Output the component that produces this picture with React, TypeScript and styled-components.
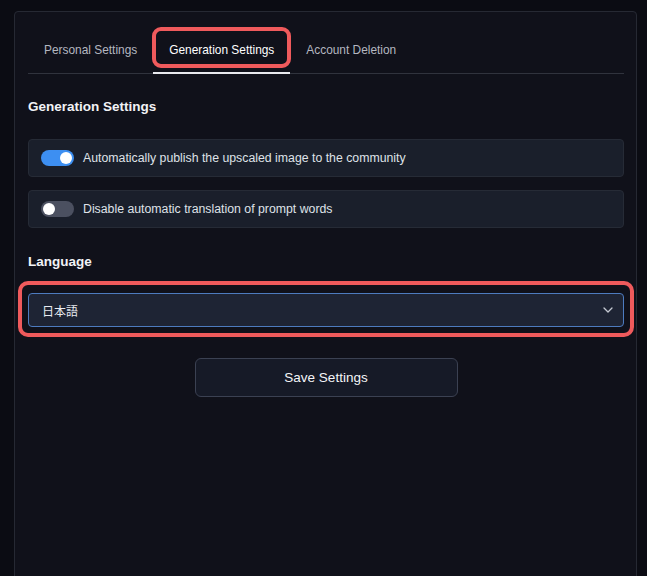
import React, { useState } from "react";
import styled, { createGlobalStyle } from "styled-components";

const Global = createGlobalStyle`
  html, body { margin: 0; padding: 0; background: #0b0c13; }
  body { font-family: "Liberation Sans", Arial, "Noto Sans CJK JP", sans-serif; color: #e6e8ee; }
  * { box-sizing: border-box; }
`;

const Page = styled.div`
  width: 647px;
  height: 576px;
  padding: 11px 10px 0 14px;
  overflow: hidden;
`;

const Card = styled.div`
  background: #10111a;
  border: 1px solid #262933;
  border-radius: 4px;
  height: 600px;
  padding: 16px 12px 0 13px;
`;

const TabBar = styled.div`
  display: flex;
  align-items: stretch;
  border-bottom: 1px solid #30333d;
  height: 46px;
`;

const Tab = styled.div<{ $active?: boolean; $highlight?: boolean }>`
  position: relative;
  display: flex;
  align-items: center;
  padding: 0 16px;
  font-size: 11.9px;
  color: ${(p) => (p.$active ? "#ffffff" : "#b4b7c0")};
  border-bottom: 2px solid ${(p) => (p.$active ? "#e8e9ee" : "transparent")};
  margin-bottom: -1px;
  ${(p) =>
    p.$highlight &&
    `&::after {
      content: "";
      position: absolute;
      left: -1px; right: -1px; top: -1px; bottom: 4px;
      border: 4px solid #ef5a5c;
      border-radius: 9px;
    }`}
`;

const SectionTitle = styled.h2<{ $gap?: number }>`
  margin: ${(p) => p.$gap ?? 24}px 0 0;
  font-size: 13.5px;
  font-weight: 700;
  color: #f2f3f6;
  line-height: 18px;
`;

const Rows = styled.div`
  display: flex;
  flex-direction: column;
  gap: 13px;
  margin-top: 23px;
`;

const Row = styled.div`
  display: flex;
  align-items: center;
  gap: 9px;
  height: 38px;
  padding: 0 12px;
  background: #1a1f2b;
  border: 1px solid #262b36;
  border-radius: 4px;
  font-size: 12.3px;
  color: #dfe2e8;
`;

const Switch = styled.div<{ $on?: boolean }>`
  position: relative;
  width: 33px;
  height: 16px;
  border-radius: 8px;
  background: ${(p) => (p.$on ? "#3d8ff2" : "#4b5060")};
  flex-shrink: 0;
  &::after {
    content: "";
    position: absolute;
    top: 2px;
    left: ${(p) => (p.$on ? "19px" : "2px")};
    width: 12px;
    height: 12px;
    border-radius: 50%;
    background: #ffffff;
  }
`;

const Highlight = styled.div`
  margin: 10px -10px 0 -10px;
  padding: 8px 6px 6px;
  border: 4px solid #ef5a5c;
  border-radius: 10px;
`;

const Select = styled.div`
  display: flex;
  align-items: center;
  justify-content: space-between;
  height: 34px;
  padding: 0 10px 0 13px;
  background: #1e2434;
  border: 1px solid #4d7bbf;
  border-radius: 4px;
  font-size: 12px;
  color: #e8eaf0;
  font-family: "Noto Sans CJK JP", sans-serif;
`;

const ButtonWrap = styled.div`
  display: flex;
  justify-content: center;
  margin-top: 21px;
`;

const SaveButton = styled.button`
  width: 263px;
  height: 39px;
  background: #161a27;
  border: 1px solid #3b4152;
  border-radius: 6px;
  color: #f4f5f8;
  font-family: "Liberation Sans", Arial, sans-serif;
  font-size: 13.5px;
`;

export default function App() {
  const [a, setA] = useState(true);
  const [b, setB] = useState(false);
  return (
    <Page>
      <Global />
      <Card>
        <TabBar>
          <Tab>Personal Settings</Tab>
          <Tab $active $highlight>Generation Settings</Tab>
          <Tab>Account Deletion</Tab>
        </TabBar>
        <SectionTitle>Generation Settings</SectionTitle>
        <Rows>
          <Row onClick={() => setA(!a)}>
            <Switch $on={a} />
            Automatically publish the upscaled image to the community
          </Row>
          <Row onClick={() => setB(!b)}>
            <Switch $on={b} />
            Disable automatic translation of prompt words
          </Row>
        </Rows>
        <SectionTitle $gap={25}>Language</SectionTitle>
        <Highlight>
          <Select>
            <span>日本語</span>
            <svg width="10" height="6" viewBox="0 0 10 6" fill="none">
              <path d="M1 1l4 4 4-4" stroke="#c5c9d2" strokeWidth="1.3" strokeLinecap="round" strokeLinejoin="round" />
            </svg>
          </Select>
        </Highlight>
        <ButtonWrap>
          <SaveButton>Save Settings</SaveButton>
        </ButtonWrap>
      </Card>
    </Page>
  );
}
